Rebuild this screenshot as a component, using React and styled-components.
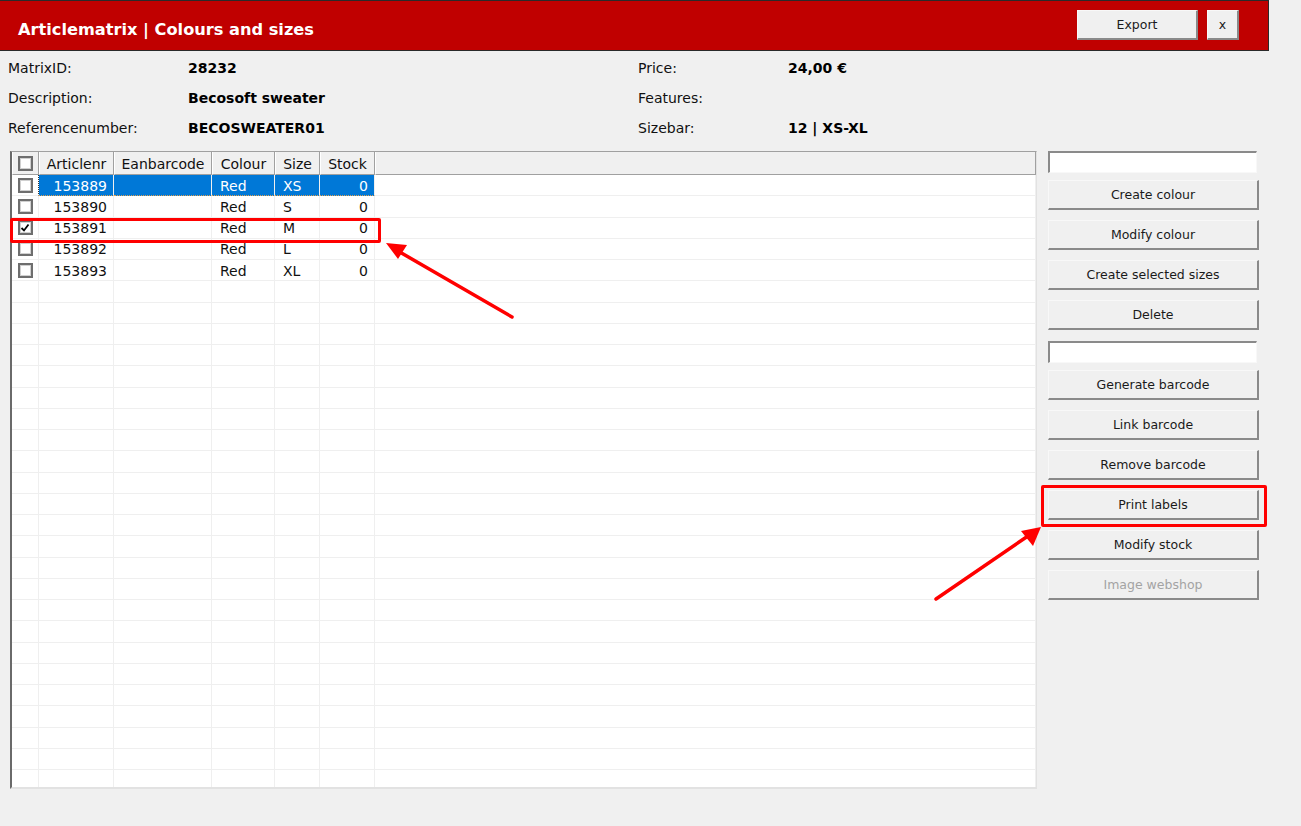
import React from "react";
import styled, { createGlobalStyle } from "styled-components";

const Global = createGlobalStyle`
  html, body { margin: 0; padding: 0; background: #f0f0f0; }
  body { font-family: "DejaVu Sans", Verdana, sans-serif; color: #000; }
  * { box-sizing: border-box; }
`;

const Page = styled.div`
  position: relative;
  width: 1301px;
  height: 826px;
  overflow: hidden;
  background: #f0f0f0;
`;

const TitleBar = styled.header`
  width: 1269px;
  height: 51px;
  background: #c00000;
  border: 1px solid #2a2a2a;
  border-left: none;
  display: flex;
  align-items: center;
  padding: 0 29px 2px 18px;
`;

const Title = styled.h1`
  margin: 10px 0 0;
  flex: 1;
  font-size: 16.2px;
  font-weight: bold;
  color: #fff;
`;

const Raised = styled.button`
  height: 30px;
  background: #f0f0f0;
  border-style: solid;
  border-width: 1px 2px 2px 1px;
  border-color: #f8f8f8 #8a8a8a #8a8a8a #f8f8f8;
  font-family: "DejaVu Sans", Verdana, sans-serif;
  font-size: 12.5px;
  color: ${(p) => (p.disabled ? "#a3a3a3" : "#1a1a1a")};
  padding: 0;
  cursor: default;
`;

const TitleButton = styled(Raised)`
  width: ${(p) => p.$w}px;
  margin-left: ${(p) => p.$ml}px;
  padding-top: 1px;
`;

const Info = styled.section`
  display: grid;
  grid-template-columns: 180px 450px 150px 1fr;
  grid-auto-rows: 30px;
  align-items: center;
  padding: 2px 8px 0;
  font-size: 14px;
`;

const Label = styled.span`
  color: #111;
`;

const Value = styled.span`
  font-weight: bold;
`;

const Content = styled.main`
  display: flex;
  align-items: flex-start;
  padding: 0 0 0 10px;
  gap: 11px;
  margin-top: 8px;
`;

const Grid = styled.div`
  width: 1027px;
  height: 638px;
  background: #fff;
  border-style: solid;
  border-width: 1px 1px 2px 2px;
  border-color: #a0a0a0 #e2e2e2 #e2e2e2 #6a6a6a;
  overflow: hidden;
  font-size: 14px;
`;

const Row = styled.div`
  display: grid;
  grid-template-columns: 27px 75px 98px 63px 45px 55px 1fr;
  height: ${(p) => (p.$head ? 23 : 21.25)}px;
`;

const HeadCell = styled.div`
  background: #f0f0f0;
  border-right: 1px solid #a0a0a0;
  border-bottom: 1px solid #a0a0a0;
  border-left: 1px solid #fff;
  display: flex;
  align-items: center;
  justify-content: center;
  color: #111;
  padding-top: 1px;
`;

const Cell = styled.div`
  display: flex;
  align-items: center;
  justify-content: ${(p) => (p.$right ? "flex-end" : p.$center ? "center" : "flex-start")};
  padding: 1px 6px 0 8px;
  border-right: 1px solid #efefef;
  border-bottom: 1px solid #efefef;
  background: ${(p) => (p.$sel ? "#0078d7" : "#fff")};
  color: ${(p) => (p.$sel ? "#fff" : "#111")};
  ${(p) => p.$sel && "border-bottom: 1px dotted #e0a050;"}
  ${(p) => p.$focus && "border-right: 1px dotted #333;"}
  white-space: nowrap;
`;

const Check = styled.span`
  width: 15px;
  height: 15px;
  border: 2px solid #6e6e6e;
  background: #fff;
  display: inline-flex;
  align-items: center;
  justify-content: center;
  box-shadow: inset 0 0 0 1px #d0d0d0;
`;

const Side = styled.aside`
  width: 211px;
  display: flex;
  flex-direction: column;
`;

const Input = styled.div`
  width: 209px;
  height: 22px;
  background: #fff;
  border-style: solid;
  border-width: 2px 1px 1px 2px;
  border-color: #8a8a8a #f8f8f8 #f8f8f8 #8a8a8a;
  margin: ${(p) => p.$m || "0"};
`;

const SideButton = styled(Raised)`
  width: 211px;
  margin-bottom: ${(p) => p.$mb ?? 10}px;
`;

const Box = styled.div`
  position: absolute;
  left: ${(p) => p.$x}px;
  top: ${(p) => p.$y}px;
  width: ${(p) => p.$w}px;
  height: ${(p) => p.$h}px;
  border: 3px solid #ff0000;
  border-radius: 2px;
  pointer-events: none;
`;

const Arrows = styled.svg`
  position: absolute;
  inset: 0;
  pointer-events: none;
`;

const rows = [
  { nr: "153889", colour: "Red", size: "XS", stock: "0", sel: true },
  { nr: "153890", colour: "Red", size: "S", stock: "0" },
  { nr: "153891", colour: "Red", size: "M", stock: "0", checked: true },
  { nr: "153892", colour: "Red", size: "L", stock: "0" },
  { nr: "153893", colour: "Red", size: "XL", stock: "0" },
];

const CheckMark = () => (
  <svg width="10" height="10" viewBox="0 0 10 10">
    <path d="M1.5 5 L4 7.5 L8.5 1.5" stroke="#000" strokeWidth="1.8" fill="none" />
  </svg>
);

export default function App() {
  const empty = Array.from({ length: 24 });
  return (
    <Page>
      <Global />
      <TitleBar>
        <Title>Articlematrix | Colours and sizes</Title>
        <TitleButton $w={121} $ml={0}>Export</TitleButton>
        <TitleButton $w={32} $ml={9}>x</TitleButton>
      </TitleBar>

      <Info>
        <Label>MatrixID:</Label>
        <Value>28232</Value>
        <Label>Price:</Label>
        <Value>24,00 €</Value>
        <Label>Description:</Label>
        <Value>Becosoft sweater</Value>
        <Label>Features:</Label>
        <Value />
        <Label>Referencenumber:</Label>
        <Value>BECOSWEATER01</Value>
        <Label>Sizebar:</Label>
        <Value>12 | XS-XL</Value>
      </Info>

      <Content>
        <Grid>
          <Row $head>
            <HeadCell><Check /></HeadCell>
            <HeadCell>Articlenr</HeadCell>
            <HeadCell>Eanbarcode</HeadCell>
            <HeadCell>Colour</HeadCell>
            <HeadCell>Size</HeadCell>
            <HeadCell>Stock</HeadCell>
            <HeadCell />
          </Row>
          {rows.map((r) => (
            <Row key={r.nr}>
              <Cell $center $focus={r.sel} style={{ padding: 0 }}>
                <Check>{r.checked && <CheckMark />}</Check>
              </Cell>
              <Cell $right $sel={r.sel}>{r.nr}</Cell>
              <Cell $sel={r.sel} />
              <Cell $sel={r.sel}>{r.colour}</Cell>
              <Cell $sel={r.sel}>{r.size}</Cell>
              <Cell $right $sel={r.sel}>{r.stock}</Cell>
              <Cell />
            </Row>
          ))}
          {empty.map((_, i) => (
            <Row key={i}>
              <Cell /><Cell /><Cell /><Cell /><Cell /><Cell /><Cell />
            </Row>
          ))}
        </Grid>

        <Side>
          <Input $m="0 0 7px" />
          <SideButton>Create colour</SideButton>
          <SideButton>Modify colour</SideButton>
          <SideButton>Create selected sizes</SideButton>
          <SideButton $mb={11}>Delete</SideButton>
          <Input $m="0 0 7px" />
          <SideButton>Generate barcode</SideButton>
          <SideButton>Link barcode</SideButton>
          <SideButton>Remove barcode</SideButton>
          <SideButton>Print labels</SideButton>
          <SideButton>Modify stock</SideButton>
          <SideButton disabled>Image webshop</SideButton>
        </Side>
      </Content>

      <Box $x={10} $y={218} $w={371} $h={25} />
      <Box $x={1041} $y={485} $w={226} $h={42} />
      <Arrows width="1301" height="826" viewBox="0 0 1301 826">
        <line x1="512" y1="317" x2="398" y2="251" stroke="#ff0000" strokeWidth="3.5" strokeLinecap="round" />
        <polygon points="386,243 407,245 398,259" fill="#ff0000" />
        <line x1="936" y1="599" x2="1028" y2="536" stroke="#ff0000" strokeWidth="3.5" strokeLinecap="round" />
        <polygon points="1041,527 1033,546 1021,531" fill="#ff0000" />
      </Arrows>
    </Page>
  );
}
